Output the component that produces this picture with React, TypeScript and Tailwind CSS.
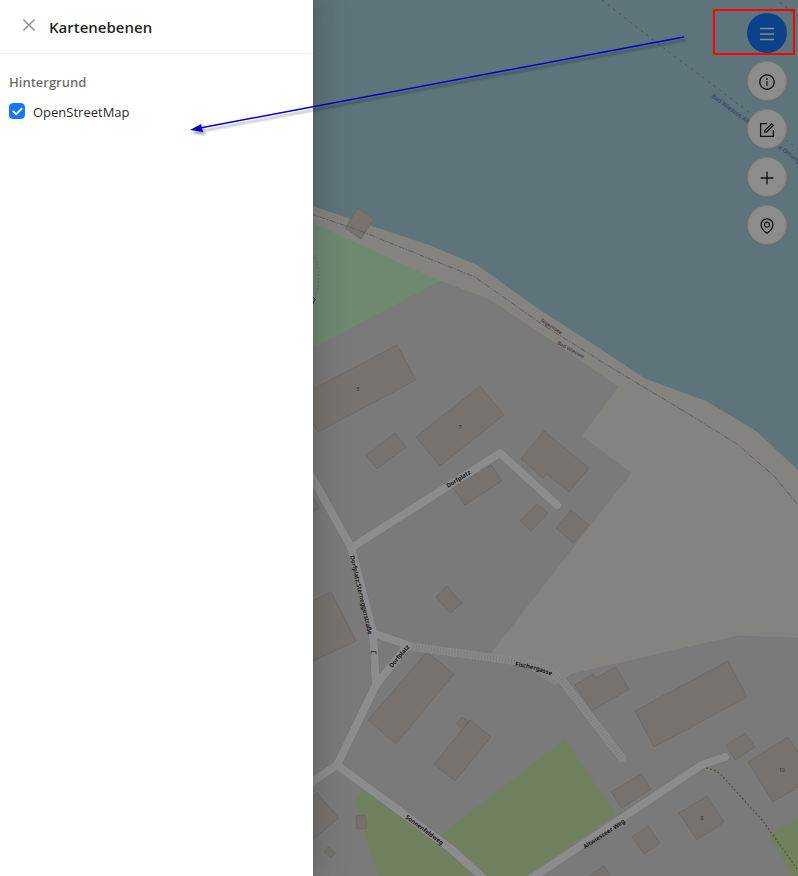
import { useState } from 'react';
import {
  AiOutlineClose,
  AiOutlineEnvironment,
  AiOutlineForm,
  AiOutlineInfoCircle,
  AiOutlineMenu,
  AiOutlinePlus,
} from 'react-icons/ai';
import { FaCheck } from 'react-icons/fa6';

const BUILDINGS = [
  '358,208 374,219 361,239 345,228',
  '300,396 397,345 416,380 318,432 300,400',
  '480,386 504,415 440,466 416,437',
  '395,433 406,447 377,469 366,455',
  '490,463 502,481 465,505 453,488',
  '544,431 589,468 569,492 547,474 543,478 521,459',
  '537,504 548,513 531,531 520,521',
  '571,510 589,525 573,543 556,528',
  '447,586 462,603 450,613 436,597',
  '300,607 331,592 356,641 300,667',
  '427,652 454,674 396,744 368,720',
  '462,717 469,722 463,729 456,724',
  '470,720 491,737 455,781 434,764',
  '300,808 317,793 339,818 300,850',
  '356,816 365,815 367,828 357,829',
  '329,846 335,853 331,858 324,852',
  '575,685 593,674 596,678 616,667 629,689 592,711',
  '728,661 747,697 654,747 635,711',
  '745,733 755,747 735,760 726,745',
  '788,737 810,770 810,780 773,802 748,762',
  '707,796 724,822 697,840 679,813',
  '641,774 651,789 622,808 611,792',
  '648,826 660,843 644,854 632,837',
  '583,880 604,866 613,880',
  '300,480 320,508 300,518',
];

const ROADS = [
  'M300 456L351 547L373 632L376 685L337 765L300 790',
  'M351 548L500 453L557 505',
  'M373 633L407 645',
  'M376 685L407 646',
  'M337 765L450 848L490 884',
  'M520 886L700 766Q703 764 725 757',
];

const HOUSE_NUMBERS = [
  { x: 358, y: 391, label: '5' },
  { x: 460, y: 429, label: '7' },
  { x: 782, y: 772, label: '10' },
  { x: 702, y: 820, label: '8' },
];

const STREETS = [
  { id: 'dorfplatz', d: 'M448 488L480 468', label: 'Dorfplatz' },
  { id: 'sternegger', d: 'M350 556L370 642', label: 'Dorfplatz;Sterneggerstraße' },
  { id: 'dorfplatz-2', d: 'M392 668L420 635', label: 'Dorfplatz' },
  { id: 'fischergasse', d: 'M515 666Q540 669 562 681', label: 'Fischergasse' },
  { id: 'sonnenfeldweg', d: 'M405 818L460 859', label: 'Sonnenfeldweg' },
  { id: 'altwiesseer', d: 'M585 849L650 806', label: 'Altwiesseer Weg' },
];

const TOOLS = [
  { label: 'Information', icon: AiOutlineInfoCircle },
  { label: 'Bearbeiten', icon: AiOutlineForm },
  { label: 'Hinzufügen', icon: AiOutlinePlus },
  { label: 'Standort', icon: AiOutlineEnvironment },
];

function StreetMap() {
  return (
    <svg
      className="absolute inset-0 h-full w-full bg-[#f2efe9] font-['Noto_Sans',sans-serif]"
      viewBox="313 0 485 876"
      preserveAspectRatio="xMinYMin slice"
      aria-hidden="true"
    >
      <path
        fill="#aad3df"
        d="M300 0H820V490L798 470L756 431L706 401L646 379L590 342L540 310L477 265L429 245L375 227L300 202Z"
      />
      <path
        fill="#e0dfdf"
        stroke="#d2d1d0"
        strokeWidth="0.5"
        d="M300 355L440 281L490 300L550 340L618 387L581 436L631 473L489 655L530 670L555 686L572 674L738 636L820 639V890H300Z"
      />
      <path fill="#c8facc" d="M300 217L440 281L300 355Z" />
      <path
        fill="#cdebb0"
        d="M363 790L440 835L565 739L616 814L520 880H379L363 829L354 801ZM820 804L768 836L798 884H820Z"
      />

      <g fill="#d9d0c9" stroke="#c2b4a9" strokeWidth="0.7">
        {BUILDINGS.map((points) => (
          <polygon key={points} points={points} />
        ))}
      </g>

      {/* roads: casing first, fill on top */}
      <g fill="none" stroke="#cfcfcf" strokeWidth="9" strokeLinecap="round" strokeLinejoin="round">
        {ROADS.map((d) => (
          <path key={d} d={d} />
        ))}
      </g>
      <path
        d="M407 646L515 661Q548 665 565 684L622 758"
        fill="none"
        stroke="#f8f8f8"
        strokeWidth="8"
        strokeLinecap="round"
      />
      <path
        d="M407 646L515 661Q548 665 565 684L622 758"
        fill="none"
        stroke="#e4e4e4"
        strokeWidth="6"
        strokeDasharray="1 2"
      />
      <g fill="none" stroke="#fff" strokeWidth="8" strokeLinecap="round" strokeLinejoin="round">
        {ROADS.map((d) => (
          <path key={d} d={d} />
        ))}
      </g>

      <path
        d="M706 768Q718 770 724 778L762 820L798 870"
        fill="none"
        stroke="#b3873d"
        strokeWidth="1.2"
        strokeDasharray="2 2"
      />
      <path
        d="M300 238Q326 262 316 295"
        fill="none"
        stroke="#e2a09a"
        strokeDasharray="1.5 2"
      />
      <path
        d="M300 210L358 230L475 277L540 323L612 368L687 413L737 444L775 477L798 505"
        fill="none"
        stroke="#b5a0b3"
        strokeWidth="1"
        strokeDasharray="6 1.5 1.5 1.5"
      />
      <path
        d="M602 0L657 43L750 113L798 149M774 -2L798 16"
        fill="none"
        stroke="#8592cc"
        strokeDasharray="3 4"
      />

      <defs>
        <path id="ferry-west" d="M711 97L770 140" />
        <path id="ferry-east" d="M778 148L798 163" />
        <path id="tegernsee" d="M540 321L580 347" />
        <path id="wiessee" d="M557 344L600 368" />
        {STREETS.map((street) => (
          <path key={street.id} id={street.id} d={street.d} />
        ))}
      </defs>
      <g fontSize="6" fontWeight="500" fill="#6371c4">
        <text>
          <textPath href="#ferry-west">Bad Wiessee Abwinkl</textPath>
        </text>
        <text>
          <textPath href="#ferry-east">e Ortung</textPath>
        </text>
      </g>
      <g fontSize="5" fontWeight="500" fill="#80517f">
        <text>
          <textPath href="#tegernsee">Tegernsee</textPath>
        </text>
        <text>
          <textPath href="#wiessee">Bad Wiessee</textPath>
        </text>
      </g>
      <g fontSize="6" fontWeight="600" fill="#111">
        {STREETS.map((street) => (
          <text key={street.id}>
            <textPath href={`#${street.id}`}>{street.label}</textPath>
          </text>
        ))}
      </g>
      <g fontSize="5" fill="#555" textAnchor="middle">
        {HOUSE_NUMBERS.map((house) => (
          <text key={house.label} x={house.x} y={house.y}>
            {house.label}
          </text>
        ))}
      </g>
      <path d="M371 654V651.5H376V654" fill="none" stroke="#444" strokeWidth="0.8" />
      <path d="M313 297L315 299L313 304" fill="none" stroke="#2a3fb5" />
    </svg>
  );
}

function Annotation() {
  return (
    <svg
      className="pointer-events-none absolute top-0 right-0 z-20 h-[160px] w-[620px]"
      viewBox="178 0 620 160"
      aria-hidden="true"
    >
      <g className="drop-shadow-[2px_3px_1px_rgba(0,0,0,0.35)]">
        <path d="M684 37L200 128" stroke="#0000d0" strokeWidth="1.5" />
        <path d="M190 130L201 124L203 132Z" fill="#0000d0" />
      </g>
      <rect x="714" y="10" width="80" height="44" fill="none" stroke="#f00" strokeWidth="2" />
    </svg>
  );
}

export default function App() {
  const [osmVisible, setOsmVisible] = useState(true);

  return (
    <div className="relative flex min-h-screen overflow-hidden font-['Open_Sans',sans-serif] text-black/88">
      <aside className="z-10 w-[313px] shrink-0 bg-white shadow-[6px_0_16px_0_rgba(0,0,0,0.08),3px_0_6px_-4px_rgba(0,0,0,0.12),9px_0_28px_8px_rgba(0,0,0,0.05)]">
        <header className="flex h-[54px] items-center gap-[11px] border-b border-[#f0f0f0] px-5">
          <button type="button" aria-label="Schließen" className="pb-1 text-black/45">
            <AiOutlineClose size={18} />
          </button>
          <h1 className="text-[15px] leading-6 font-semibold">Kartenebenen</h1>
        </header>
        <div className="px-[9px] pt-[17px]">
          <h2 className="text-[13px] leading-[22px] font-semibold text-black/60">Hintergrund</h2>
          <label className="mt-2 flex items-center gap-2 text-[13px] leading-[22px]">
            <span className="grid h-[18px] w-4 content-start items-center justify-items-center">
              <input
                type="checkbox"
                checked={osmVisible}
                onChange={(e) => setOsmVisible(e.target.checked)}
                className="peer col-start-1 row-start-1 size-4 appearance-none rounded border border-[#d9d9d9] bg-white checked:border-[#1677ff] checked:bg-[#1677ff]"
              />
              <FaCheck
                size={11}
                strokeWidth={30}
                className="pointer-events-none invisible col-start-1 row-start-1 text-white peer-checked:visible"
              />
            </span>
            OpenStreetMap
          </label>
        </div>
      </aside>

      <main className="relative flex-1">
        <StreetMap />
        <div className="absolute top-[13px] right-[11px] flex flex-col gap-2">
          <button
            type="button"
            aria-label="Kartenebenen"
            className="flex size-10 items-center justify-center rounded-full bg-[#1677ff] pt-0.5 text-white"
          >
            <AiOutlineMenu size={18} />
          </button>
          {TOOLS.map(({ label, icon: Icon }) => (
            <button
              key={label}
              type="button"
              aria-label={label}
              className="flex size-10 items-center justify-center rounded-full border border-[#d9d9d9] bg-white pt-0.5 shadow-[0_2px_0_rgba(0,0,0,0.02)]"
            >
              <Icon size={18} />
            </button>
          ))}
        </div>
        {/* drawer mask */}
        <div className="absolute inset-0 bg-black/45" />
      </main>

      <Annotation />
    </div>
  );
}
